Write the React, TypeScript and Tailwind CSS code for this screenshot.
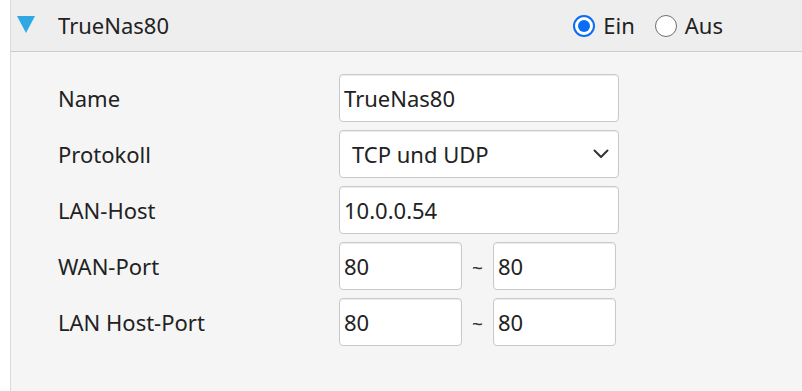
const font = { fontFamily: '"Noto Sans", "Open Sans", sans-serif' };

function Radio({ label, checked }: { label: string; checked?: boolean }) {
  return (
    <label className="flex items-center gap-[8px] text-[22px] text-[#222]">
      {checked ? (
        <span className="w-[22px] h-[22px] rounded-full border-[2px] border-[#0b6cf5] bg-white flex items-center justify-center">
          <span className="w-[12px] h-[12px] rounded-full bg-[#0b6cf5]" />
        </span>
      ) : (
        <span className="w-[22px] h-[22px] rounded-full border-[1.5px] border-[#6f6f6f] bg-white" />
      )}
      {label}
    </label>
  );
}

function Field({ children, className = '' }: { children?: React.ReactNode; className?: string }) {
  return (
    <div
      className={`h-[48px] bg-white border border-[#c9c9c9] rounded-[4px] shadow-[inset_0_1px_1px_rgba(0,0,0,0.08)] flex items-center text-[22px] text-[#222] ${className}`}
    >
      {children}
    </div>
  );
}

function Row({ label, children }: { label: string; children: React.ReactNode }) {
  return (
    <div className="flex items-center h-[48px]">
      <div className="w-[328px] pl-[47px] text-[22px] text-[#222]">{label}</div>
      {children}
    </div>
  );
}

function PortRange({ from, to }: { from: string; to: string }) {
  return (
    <div className="flex items-center">
      <Field className="w-[123px] pl-[4px]">{from}</Field>
      <span className="w-[31px] text-center text-[19px] text-[#333] pt-[4px]">~</span>
      <Field className="w-[123px] pl-[4px]">{to}</Field>
    </div>
  );
}

export default function App() {
  return (
    <div className="w-[802px] h-[391px] bg-white pl-[10px] overflow-hidden" style={font}>
      <div className="h-full border-l border-[#dadada] bg-[#f5f5f5]">
        {/* Header */}
        <div className="h-[52px] bg-[#eeeeee] border-b border-[#cccccc] flex items-center">
          <svg width="18" height="17" viewBox="0 0 18 17" className="ml-[6px] -mt-[3px]">
            <path d="M0 0 H18 L9 17 Z" fill="#2fa9e3" />
          </svg>
          <span className="ml-[23px] text-[22px] text-[#222]">TrueNas80</span>
          <div className="ml-auto mr-[79px] flex items-center gap-[20px]">
            <Radio label="Ein" checked />
            <Radio label="Aus" />
          </div>
        </div>

        {/* Form */}
        <div className="pt-[22px] flex flex-col gap-[8px]">
          <Row label="Name">
            <Field className="w-[280px] pl-[4px]">TrueNas80</Field>
          </Row>
          <Row label="Protokoll">
            <Field className="w-[280px] pl-[12px] pr-[9px] justify-between">
              <span>TCP und UDP</span>
              <svg width="16" height="10" viewBox="0 0 16 10" fill="none">
                <path d="M1.5 1.5 L8 8 L14.5 1.5" stroke="#333" strokeWidth="2" strokeLinecap="round" strokeLinejoin="round" />
              </svg>
            </Field>
          </Row>
          <Row label="LAN-Host">
            <Field className="w-[280px] pl-[4px]">10.0.0.54</Field>
          </Row>
          <Row label="WAN-Port">
            <PortRange from="80" to="80" />
          </Row>
          <Row label="LAN Host-Port">
            <PortRange from="80" to="80" />
          </Row>
        </div>
      </div>
    </div>
  );
}
